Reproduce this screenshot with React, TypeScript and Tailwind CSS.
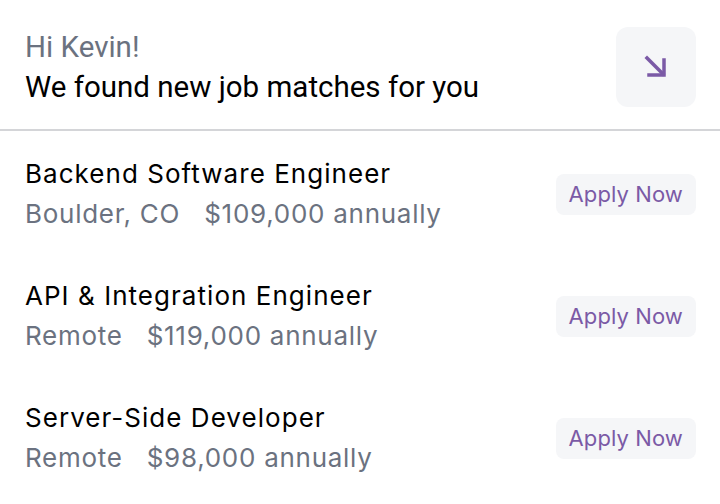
import React from "react";

const jobs = [
  { title: "Backend Software Engineer", loc: "Boulder, CO", pay: "$109,000 annually" },
  { title: "API & Integration Engineer", loc: "Remote", pay: "$119,000 annually" },
  { title: "Server-Side Developer", loc: "Remote", pay: "$98,000 annually" },
];

export default function App() {
  return (
    <div className="w-[720px] h-[504px] bg-white overflow-hidden" style={{ fontFamily: "Inter, 'Noto Sans', sans-serif" }}>
      <div className="flex items-center justify-between pl-[25px] pr-[24px] pt-[27px] pb-[22px] border-b-2 border-[#d4d5d8]">
        <div className="flex flex-col" style={{ fontFamily: "Roboto, sans-serif" }}>
          <span className="text-[29.5px] leading-[40px] text-[#6b7280]">Hi Kevin!</span>
          <span className="text-[29.5px] leading-[40px] text-black">We found new job matches for you</span>
        </div>
        <button className="w-[80px] h-[80px] rounded-[12px] bg-[#f5f6f8] flex items-center justify-center">
          <svg width="24" height="24" viewBox="0 0 24 24" fill="none" stroke="#7b5aa6" strokeWidth="3.5" strokeLinecap="square" strokeLinejoin="miter">
            <path d="M3 3L19 19" />
            <path d="M20 5V20H5" />
          </svg>
        </button>
      </div>
      <div className="flex flex-col">
        {jobs.map((j) => (
          <div key={j.title} className="flex items-center justify-between pl-[25px] pr-[24px] pt-[23px] pb-[19px] h-[122px]">
            <div className="flex flex-col">
              <span className="text-[26px] leading-[40px] text-black tracking-[0.04em]">{j.title}</span>
              <span className="text-[26px] leading-[40px] text-[#6b7280] tracking-[0.028em]">
                {j.loc}
                <span className="ml-[24px]">{j.pay}</span>
              </span>
            </div>
            <button className="h-[41px] px-[13px] rounded-[8px] bg-[#f5f6f8] text-[22px] text-[#7b5aa6] tracking-[0.005em]">Apply Now</button>
          </div>
        ))}
      </div>
    </div>
  );
}
